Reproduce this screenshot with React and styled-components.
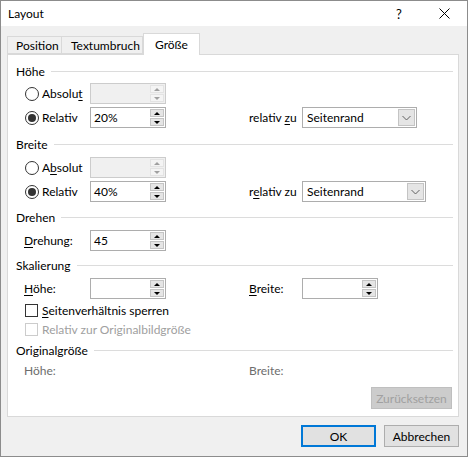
import React from 'react';
import styled, { createGlobalStyle } from 'styled-components';

const Global = createGlobalStyle`
  html, body { margin: 0; padding: 0; background: #f0f0f0; }
  body { font-family: Lato, "Noto Sans", sans-serif; font-size: 12px; color: #000; }
  * { box-sizing: border-box; }
`;

const Window = styled.div`
  width: 468px;
  height: 457px;
  border: 1px solid #8c8c8c;
  background: #f0f0f0;
  display: flex;
  flex-direction: column;
`;

const TitleBar = styled.div`
  height: 25px;
  background: #fff;
  display: flex;
  align-items: center;
  padding-left: 7px;
`;

const Title = styled.span`
  flex: 1;
`;

const TitleButton = styled.div`
  width: ${p => p.$w}px;
  height: 25px;
  display: flex;
  align-items: center;
  justify-content: center;
  font-size: 13px;
`;

const TabStrip = styled.div`
  display: flex;
  align-items: flex-end;
  height: 28px;
  padding-left: 6px;
  position: relative;
  z-index: 1;
`;

const Tab = styled.div`
  width: ${p => p.$w}px;
  height: ${p => (p.$active ? 22 : 18)}px;
  margin-bottom: ${p => (p.$active ? -1 : 0)}px;
  padding-left: ${p => p.$pl}px;
  padding-top: ${p => (p.$active ? 0 : 1)}px;
  display: flex;
  align-items: center;
  background: ${p => (p.$active ? '#fff' : '#f0f0f0')};
  border: 1px solid #d9d9d9;
  border-bottom: ${p => (p.$active ? 'none' : '1px solid #d9d9d9')};
  border-left: ${p => (p.$noLeft ? 'none' : '1px solid #d9d9d9')};
`;

const Panel = styled.div`
  margin: 0 8px 0 6px;
  height: 363px;
  background: #fff;
  border: 1px solid #d9d9d9;
  padding: 8px 5px 0 8px;
  display: flex;
  flex-direction: column;
`;

const SectionHeader = styled.div`
  display: flex;
  align-items: center;
  height: 16px;
  gap: 6px;
  margin-top: ${p => p.$mt || 0}px;
  &::after {
    content: '';
    flex: 1;
    height: 1px;
    background: #dcdcdc;
  }
`;

const Row = styled.div`
  display: grid;
  grid-template-columns: 74px 76px 83px 53px auto;
  align-items: center;
  height: ${p => p.$h || 21}px;
  margin-top: ${p => (p.$mt === undefined ? 3 : p.$mt)}px;
`;

const Option = styled.label`
  display: flex;
  align-items: center;
  gap: 3px;
  padding-left: 9px;
  white-space: nowrap;
  grid-column: ${p => p.$span || 'auto'};
  color: ${p => (p.$disabled ? '#a0a0a0' : 'inherit')};
`;

const Radio = styled.span`
  width: 14px;
  height: 14px;
  border-radius: 50%;
  border: 1px solid #333;
  background: #fff;
  display: flex;
  align-items: center;
  justify-content: center;
  &::after {
    content: '';
    display: ${p => (p.$checked ? 'block' : 'none')};
    width: 8px;
    height: 8px;
    border-radius: 50%;
    background: #333;
  }
`;

const Check = styled.span`
  width: 13px;
  height: 13px;
  border: 1px solid ${p => (p.$disabled ? '#cccccc' : '#333')};
  background: #fff;
  margin-right: 1px;
`;

const Label = styled.span`
  grid-column: ${p => p.$col || 'auto'};
  padding-left: ${p => p.$pl || 0}px;
  white-space: nowrap;
  color: ${p => (p.$gray ? '#6d6d6d' : 'inherit')};
`;

const SpinBox = styled.div`
  grid-column: ${p => p.$col || 'auto'};
  width: 76px;
  height: 21px;
  border: 1px solid ${p => (p.$disabled ? '#cccccc' : '#adadad')};
  background: ${p => (p.$disabled ? '#f0f0f0' : '#fff')};
  display: flex;
  justify-content: space-between;
  padding: 1px;
`;

const SpinText = styled.span`
  padding-left: 2px;
  line-height: 17px;
`;

const SpinButtons = styled.div`
  width: 14px;
  margin-left: auto;
  display: flex;
  flex-direction: column;
  gap: 1px;
`;

const SpinButton = styled.div`
  flex: 1;
  background: ${p => (p.$disabled ? '#f4f4f4' : '#e5e5e5')};
  border: 1px solid ${p => (p.$disabled ? '#e3e3e3' : '#c4c4c4')};
  display: flex;
  align-items: center;
  justify-content: center;
`;

const Arrow = styled.span`
  width: 0;
  height: 0;
  border-left: 3px solid transparent;
  border-right: 3px solid transparent;
  ${p => (p.$down ? 'border-top' : 'border-bottom')}: 3px solid ${p => (p.$disabled ? '#a0a0a0' : '#000')};
`;

const Select = styled.div`
  grid-column: 5;
  width: ${p => p.$w}px;
  height: 21px;
  border: 1px solid #adadad;
  background: #fff;
  display: flex;
  padding: 1px;
`;

const SelectText = styled.span`
  flex: 1;
  padding-left: 3px;
  line-height: 17px;
`;

const DropButton = styled.div`
  width: 17px;
  background: #e5e5e5;
  border: 1px solid #c4c4c4;
  display: flex;
  align-items: center;
  justify-content: center;
`;

const ResetRow = styled.div`
  display: flex;
  justify-content: flex-end;
  margin-top: 8px;
  padding-right: 1px;
`;

const Button = styled.div`
  width: ${p => p.$w}px;
  height: 22px;
  display: flex;
  align-items: center;
  justify-content: center;
  background: ${p => (p.$disabled ? '#cccccc' : '#e1e1e1')};
  border: ${p => (p.$default ? '2px solid #0078d7' : p.$disabled ? '1px solid #bfbfbf' : '1px solid #adadad')};
  color: ${p => (p.$disabled ? '#a0a0a0' : '#000')};
`;

const Footer = styled.div`
  display: flex;
  justify-content: flex-end;
  gap: 8px;
  padding: 8px 8px 0 0;
`;

const U = styled.span`
  text-decoration: underline;
  text-underline-offset: 2px;
`;

function Spin({ value, disabled, col }) {
  return (
    <SpinBox $disabled={disabled} $col={col}>
      {value ? <SpinText>{value}</SpinText> : null}
      <SpinButtons>
        <SpinButton $disabled={disabled}><Arrow $disabled={disabled} /></SpinButton>
        <SpinButton $disabled={disabled}><Arrow $down $disabled={disabled} /></SpinButton>
      </SpinButtons>
    </SpinBox>
  );
}

function Dropdown({ w, value }) {
  return (
    <Select $w={w}>
      <SelectText>{value}</SelectText>
      <DropButton>
        <svg width="9" height="6" viewBox="0 0 9 6">
          <path d="M0.5 1 L4.5 5 L8.5 1" fill="none" stroke="#606060" strokeWidth="1" />
        </svg>
      </DropButton>
    </Select>
  );
}

export default function App() {
  return (
    <>
      <Global />
      <Window>
        <TitleBar>
          <Title>Layout</Title>
          <TitleButton $w={46}>?</TitleButton>
          <TitleButton $w={45}>
            <svg width="11" height="11" viewBox="0 0 11 11">
              <path d="M0.5 0.5 L10.5 10.5 M10.5 0.5 L0.5 10.5" stroke="#000" strokeWidth="1" />
            </svg>
          </TitleButton>
        </TitleBar>
        <TabStrip>
          <Tab $w={55} $pl={8}>Position</Tab>
          <Tab $w={81} $pl={9} $noLeft>Textumbruch</Tab>
          <Tab $w={57} $pl={11} $active>Größe</Tab>
        </TabStrip>
        <Panel>
          <SectionHeader>Höhe</SectionHeader>
          <Row $mt={4}>
            <Option><Radio /><span>Absolu<U>t</U></span></Option>
            <Spin disabled />
          </Row>
          <Row>
            <Option><Radio $checked /><span>Relat<U>i</U>v</span></Option>
            <Spin value="20%" />
            <Label $col={4}>relativ <U>z</U>u</Label>
            <Dropdown w={115} value="Seitenrand" />
          </Row>

          <SectionHeader $mt={8}>Breite</SectionHeader>
          <Row $mt={5}>
            <Option><Radio /><span>A<U>b</U>solut</span></Option>
            <Spin disabled />
          </Row>
          <Row>
            <Option><Radio $checked /><span>Relat<U>i</U>v</span></Option>
            <Spin value="40%" />
            <Label $col={4}>r<U>e</U>lativ zu</Label>
            <Dropdown w={124} value="Seitenrand" />
          </Row>

          <SectionHeader $mt={7}>Drehen</SectionHeader>
          <Row $mt={5}>
            <Label $pl={8}><U>D</U>rehung:</Label>
            <Spin value="45" />
          </Row>

          <SectionHeader $mt={6}>Skalierung</SectionHeader>
          <Row $mt={5}>
            <Label $pl={8}><U>H</U>öhe:</Label>
            <Spin />
            <Label $col={4}><U>B</U>reite:</Label>
            <Spin col={5} />
          </Row>
          <Row $mt={2} $h={19}>
            <Option $span="1 / 4"><Check /><span><U>S</U>eitenverhältnis sperren</span></Option>
          </Row>
          <Row $mt={0} $h={19}>
            <Option $span="1 / 4" $disabled><Check $disabled /><span>Relativ zur Originalbildgröße</span></Option>
          </Row>

          <SectionHeader $mt={3}>Originalgröße</SectionHeader>
          <Row $mt={3} $h={18}>
            <Label $pl={8} $gray>Höhe:</Label>
            <Label $col={4} $gray>Breite:</Label>
          </Row>
          <ResetRow>
            <Button $w={81} $disabled>Zurücksetzen</Button>
          </ResetRow>
        </Panel>
        <Footer>
          <Button $w={75} $default>OK</Button>
          <Button $w={75}>Abbrechen</Button>
        </Footer>
      </Window>
    </>
  );
}
